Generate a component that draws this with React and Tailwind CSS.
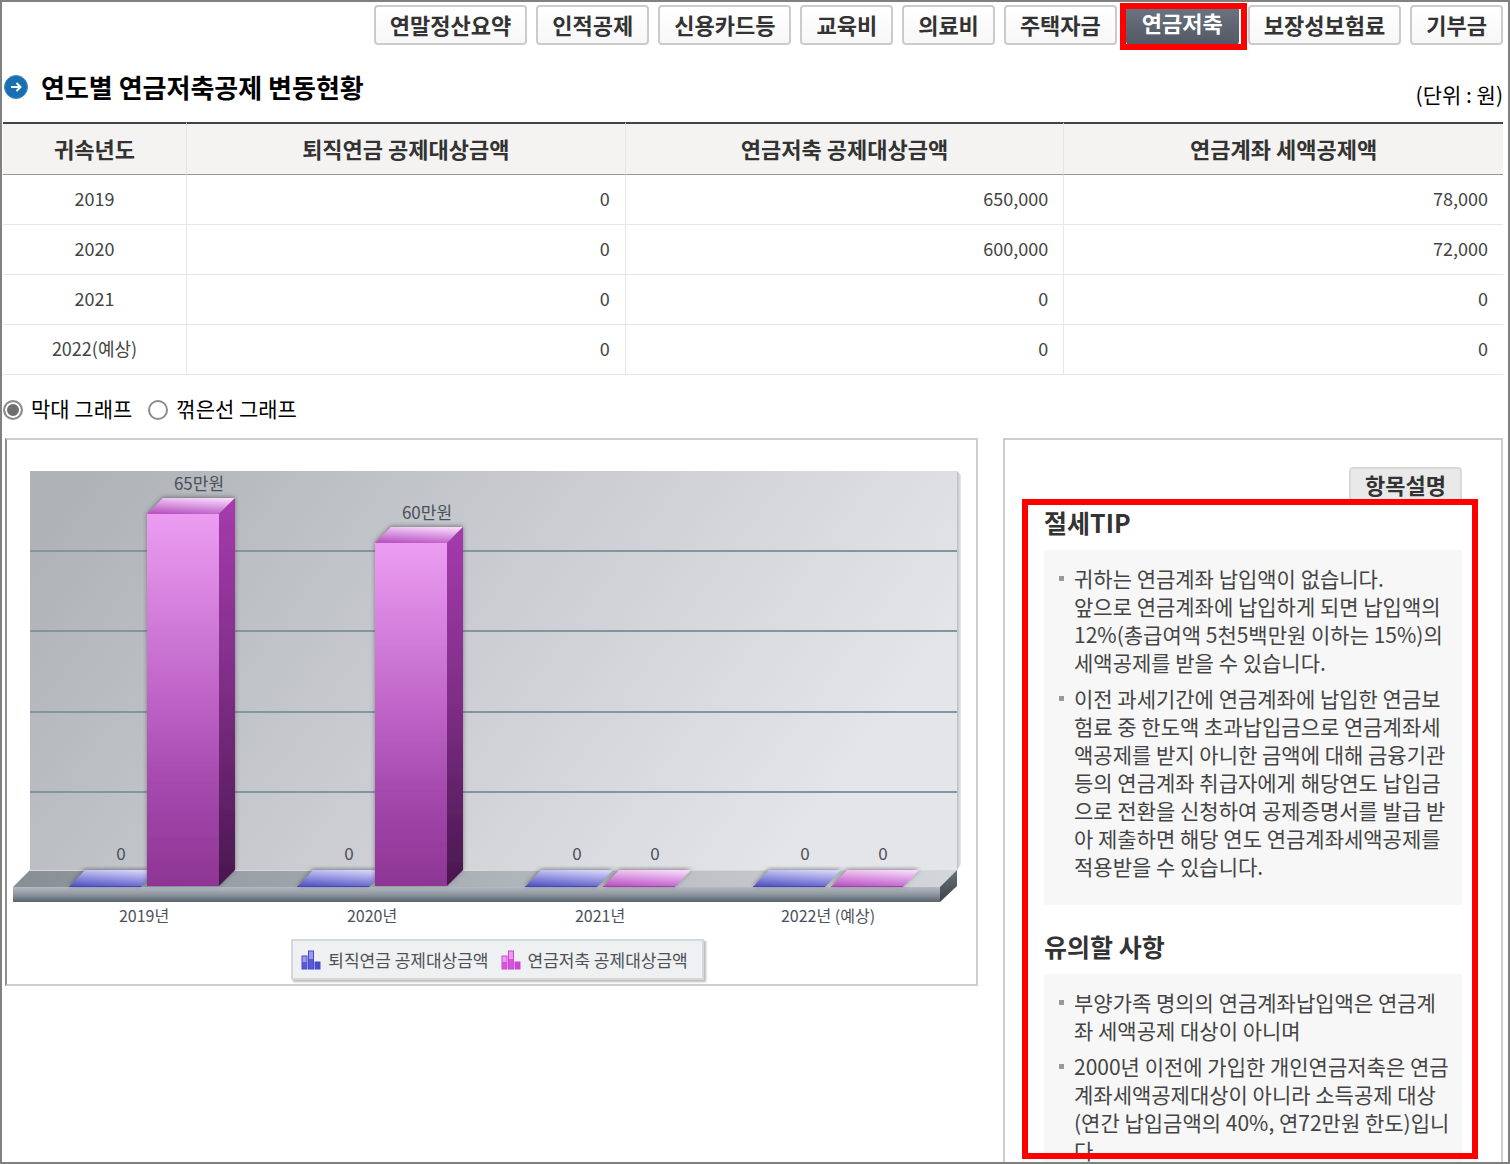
import React, { useState } from "react";

const tabs = [
  "연말정산요약",
  "인적공제",
  "신용카드등",
  "교육비",
  "의료비",
  "주택자금",
  "연금저축",
  "보장성보험료",
  "기부금",
];

const columns = ["귀속년도", "퇴직연금 공제대상금액", "연금저축 공제대상금액", "연금계좌 세액공제액"];

const rows = [
  { year: "2019", label: "2019년", retire: 0, pension: 650000, credit: 78000 },
  { year: "2020", label: "2020년", retire: 0, pension: 600000, credit: 72000 },
  { year: "2021", label: "2021년", retire: 0, pension: 0, credit: 0 },
  { year: "2022(예상)", label: "2022년 (예상)", retire: 0, pension: 0, credit: 0 },
];

const tips = [
  "귀하는 연금계좌 납입액이 없습니다.\n앞으로 연금계좌에 납입하게 되면 납입액의\n12%(총급여액 5천5백만원 이하는 15%)의\n세액공제를 받을 수 있습니다.",
  "이전 과세기간에 연금계좌에 납입한 연금보\n험료 중 한도액 초과납입금으로 연금계좌세\n액공제를 받지 아니한 금액에 대해 금융기관\n등의 연금계좌 취급자에게 해당연도 납입금\n으로 전환을 신청하여 공제증명서를 발급 받\n아 제출하면 해당 연도 연금계좌세액공제를\n적용받을 수 있습니다.",
];

const notices = [
  "부양가족 명의의 연금계좌납입액은 연금계\n좌 세액공제 대상이 아니며",
  "2000년 이전에 가입한 개인연금저축은 연금\n계좌세액공제대상이 아니라 소득공제 대상\n(연간 납입금액의 40%, 연72만원 한도)입니\n다.",
];

const won = (n) => n.toLocaleString("en-US");
const manwon = (n) => (n ? `${n / 10000}만원` : "0");

const TabMenu = () => {
  const [active, setActive] = useState("연금저축");

  return (
    <nav className="flex justify-end gap-[9px] pt-[3px]">
      {tabs.map((tab) => (
        <div key={tab} className="relative">
          <button
            type="button"
            onClick={() => setActive(tab)}
            className={
              tab === active
                ? "h-10 px-4 rounded-sm bg-linear-to-b from-[#6b7581] to-[#535965] text-white text-[22px] leading-8 font-bold whitespace-nowrap pb-1.5"
                : "h-10 px-[14px] pb-[3px] rounded-sm border-2 border-[#cbcbcb] bg-linear-to-b from-white to-[#f7f7f7] text-[#333] text-[22px] leading-8 font-bold whitespace-nowrap"
            }
          >
            {tab}
          </button>
          {tab === "연금저축" && (
            <span className="absolute -left-[6px] -right-[8px] -top-[2px] -bottom-[5px] border-[6px] border-[#ff0000] pointer-events-none" />
          )}
        </div>
      ))}
    </nav>
  );
};

const Gradients = () => (
  <defs>
    <linearGradient id="wall" gradientUnits="userSpaceOnUse" x1="120" y1="430" x2="760" y2="900">
      <stop offset="0" stopColor="#afb3b8" />
      <stop offset="1" stopColor="#e4e5e9" />
    </linearGradient>
    <linearGradient id="wallEdge" x1="0" x2="1" y1="0" y2="0">
      <stop offset="0" stopColor="#b9bcc2" />
      <stop offset="1" stopColor="#e9eaec" />
    </linearGradient>
    <linearGradient id="floor" x1="0" x2="1" y1="0" y2="0">
      <stop offset="0" stopColor="#878f95" />
      <stop offset="1" stopColor="#d3d6da" />
    </linearGradient>
    <linearGradient id="floorFront" x1="0" x2="0" y1="0" y2="1">
      <stop offset="0" stopColor="#b4bac3" />
      <stop offset="0.5" stopColor="#8d969e" />
      <stop offset="1" stopColor="#59616a" />
    </linearGradient>
    <linearGradient id="floorEnd" x1="0" x2="0" y1="0" y2="1">
      <stop offset="0" stopColor="#69727a" />
      <stop offset="1" stopColor="#3c4248" />
    </linearGradient>
    <linearGradient id="pinkFront" x1="0" x2="0" y1="0" y2="1">
      <stop offset="0" stopColor="#ec9df2" />
      <stop offset="0.5" stopColor="#bd63c6" />
      <stop offset="0.75" stopColor="#a347ab" />
      <stop offset="1" stopColor="#8d3594" />
    </linearGradient>
    <linearGradient id="pinkSide" x1="0" x2="0" y1="0" y2="1">
      <stop offset="0" stopColor="#a53bad" />
      <stop offset="0.5" stopColor="#7d2d84" />
      <stop offset="1" stopColor="#48174e" />
    </linearGradient>
    <linearGradient id="pinkTop" x1="0.35" x2="0.65" y1="1" y2="0">
      <stop offset="0" stopColor="#bb55c4" />
      <stop offset="1" stopColor="#f6d6fa" />
    </linearGradient>
    <linearGradient id="blueTop" x1="0.35" x2="0.65" y1="1" y2="0">
      <stop offset="0" stopColor="#5555c4" />
      <stop offset="1" stopColor="#d3d3fa" />
    </linearGradient>
    <filter id="soft" x="-20%" y="-20%" width="140%" height="140%">
      <feDropShadow dx="0" dy="-1" stdDeviation="2" floodColor="#444" floodOpacity="0.6" />
    </filter>
  </defs>
);

const FlatBar = ({ x, fill, edge }) => (
  <g>
    <polygon
      points={`${x},887 ${x + 16},870 ${x + 88},870 ${x + 72},887`}
      fill={fill}
      filter="url(#soft)"
    />
    <path d={`M${x} 886.5H${x + 72}`} stroke={edge} />
  </g>
);

const TallBar = ({ x, top }) => (
  <g filter="url(#soft)">
    <polygon points={`${x},${top} ${x + 16},${top - 16} ${x + 88},${top - 16} ${x + 72},${top}`} fill="url(#pinkTop)" />
    <polygon points={`${x + 72},${top} ${x + 88},${top - 16} ${x + 88},870 ${x + 72},886`} fill="url(#pinkSide)" />
    <rect x={x} y={top} width="72" height={886 - top} fill="url(#pinkFront)" />
  </g>
);

const BarChart = () => (
  <svg viewBox="7 440 969 491" className="block w-full" role="img" aria-label="연도별 연금저축공제 막대 그래프">
    <Gradients />
    <polygon points="957,471 961,475 961,864 957,870" fill="url(#wallEdge)" />
    <rect x="30" y="471" width="927" height="399" fill="url(#wall)" />
    {[550, 630, 711, 791].map((y) => (
      <rect key={y} x="30" y={y} width="927" height="2" fill="#8494a0" />
    ))}
    <polygon points="30,870 957,870 940,887 13,887" fill="url(#floor)" />
    <path d="M30 870.5H957" stroke="#d5d9dc" />
    <rect x="13" y="887" width="927" height="15" fill="url(#floorFront)" />
    <polygon points="940,887 957,870 957,886 940,902" fill="url(#floorEnd)" />
    {rows.map((row, i) => {
      const x = 69 + i * 228;
      const top = 886 - Math.round((row.pension / 10000) * 5.72);
      return (
        <g key={row.year} textAnchor="middle" fill="#4c5058">
          <FlatBar x={x} fill="url(#blueTop)" edge="#4747b4" />
          {row.pension > 0 ? (
            <TallBar x={x + 78} top={top} />
          ) : (
            <FlatBar x={x + 78} fill="url(#pinkTop)" edge="#a441ac" />
          )}
          <text x={x + 52} y="860" fontSize="17">{manwon(row.retire)}</text>
          <text x={x + 130} y={row.pension > 0 ? top - 24 : 860} fontSize="17">{manwon(row.pension)}</text>
          <text x={x + 75} y="922" fontSize="16">{row.label}</text>
        </g>
      );
    })}
  </svg>
);

const LegendIcon = ({ color, light }) => (
  <svg width="20" height="20" viewBox="0 0 20 20" className="shrink-0">
    <rect x="1" y="6" width="5" height="13" fill={light} stroke={color} />
    <rect x="7.5" y="1" width="5" height="18" fill={light} stroke={color} />
    <rect x="14" y="12" width="5" height="7" fill={color} stroke={color} />
    <path d="M1 12h5v7H1zM7.500 9h5v10h-5z" fill={color} opacity="0.8" />
  </svg>
);

const TipList = ({ items }) => (
  <ul className="bg-[#f7f7f7] pt-[14px] pb-[25px] pl-[15px] space-y-2">
    {items.map((item) => (
      <li key={item} className="flex gap-2.5">
        <span className="mt-3 h-[5px] w-[5px] shrink-0 bg-[#999]" />
        <p className="text-[21px] leading-7 text-[#444] whitespace-pre">{item}</p>
      </li>
    ))}
  </ul>
);

const App = () => {
  const [graph, setGraph] = useState("bar");

  return (
    <div className="flex h-screen flex-col overflow-hidden border-2 border-[#808080] bg-white pl-px pr-[5px] font-['Noto_Sans_CJK_KR',sans-serif] text-black">
      <TabMenu />

      <div className="mt-[25px] mb-[18px] flex items-end justify-between">
        <h1 id="title" className="flex items-center gap-3 text-[26px] leading-[34px] font-bold">
          <svg width="26" height="26" viewBox="0 0 26 26">
            <circle cx="13" cy="13" r="11.500" fill="#1870b2" stroke="#4a8dbd" />
            <path d="M8 13h9M13.500 9l4 4-4 4" fill="none" stroke="#fff" strokeWidth="2" />
          </svg>
          연도별 연금저축공제 변동현황
        </h1>
        <p className="text-[21px] leading-5">(단위 : 원)</p>
      </div>

      <table aria-labelledby="title" className="w-full table-fixed border-separate border-spacing-0 text-[#444]">
        <thead>
          <tr>
            {columns.map((col) => (
              <th
                key={col}
                scope="col"
                className="h-[53px] border-t-2 border-r border-b border-t-[#444] border-r-[#e6e6e6] border-b-[#999] bg-[#f4f3f1] px-0 pt-0 pb-[3px] text-[22px] leading-7 font-bold text-[#333] first:w-[184px] last:border-r-0"
              >
                {col}
              </th>
            ))}
          </tr>
        </thead>
        <tbody className="text-right text-[18px] leading-6">
          {rows.map((row) => (
            <tr key={row.year}>
              <td className="h-[50px] border-r border-b border-[#e6e6e6] px-0 pt-0 pb-[3px] text-center">{row.year}</td>
              <td className="border-r border-b border-[#e6e6e6] pt-0 pb-[3px] pr-[15px]">{won(row.retire)}</td>
              <td className="border-r border-b border-[#e6e6e6] pt-0 pb-[3px] pr-[15px]">{won(row.pension)}</td>
              <td className="border-b border-[#e6e6e6] pt-0 pb-[3px] pr-[15px]">{won(row.credit)}</td>
            </tr>
          ))}
        </tbody>
      </table>

      <div className="mt-[21px] mb-[14px] flex gap-4 text-[21px] leading-7">
        {[["bar", "막대 그래프"], ["line", "꺾은선 그래프"]].map(([value, label]) => (
          <label key={value} className="flex items-center gap-2">
            <input
              type="radio"
              name="graph"
              value={value}
              checked={graph === value}
              onChange={() => setGraph(value)}
              className="h-5 w-5 appearance-none rounded-full border-2 border-[#8c8c8c] bg-white checked:bg-[#6f6f6f] checked:shadow-[inset_0_0_0_2px_white]"
            />
            <span className="pb-1 leading-6">{label}</span>
          </label>
        ))}
      </div>

      <div className="flex min-h-0 flex-1 gap-[25px] pl-0.5">
        <section className="flex-1 self-start border-2 border-[#cdcdcd] border-l-[#8f8f8f]">
          <BarChart />
          <div className="mt-2 mb-1 flex justify-center pl-3">
            <div className="flex h-[41px] items-center gap-3 border-2 border-[#d3d8dd] bg-[#eef0f2] pr-[14px] pl-2 text-[17px] leading-6 text-[#4c5058] shadow-[2px_2px_2px_#bbb]">
              <span className="flex items-center gap-[7px]">
                <LegendIcon color="#4a4ad0" light="#9a9aee" />
                퇴직연금 공제대상금액
              </span>
              <span className="flex items-center gap-[7px]">
                <LegendIcon color="#cf45d6" light="#eb9cf0" />
                연금저축 공제대상금액
              </span>
            </div>
          </div>
        </section>

        <aside className="relative w-[500px] shrink-0 border-2 border-b-0 border-[#cdcdcd] px-[39px] pt-[27px]">
          <div className="flex justify-end">
            <button type="button" className="h-[35px] rounded-t-sm border-2 border-b-0 border-[#d9d9d9] bg-[#e9e9e9] px-[14px] pb-1 text-[22px] leading-7 font-bold text-[#333]">
              항목설명
            </button>
          </div>
          <h2 className="mb-2 text-[25px] leading-10 font-bold text-[#333]">절세TIP</h2>
          <TipList items={tips} />
          <h2 className="mt-[21px] mb-2 text-[25px] leading-10 font-bold text-[#333]">유의할 사항</h2>
          <TipList items={notices} />
          <span className="absolute top-[59px] right-[23px] bottom-[3px] left-[17px] border-[6px] border-[#ff0000] pointer-events-none" />
        </aside>
      </div>
    </div>
  );
};

export default App;
